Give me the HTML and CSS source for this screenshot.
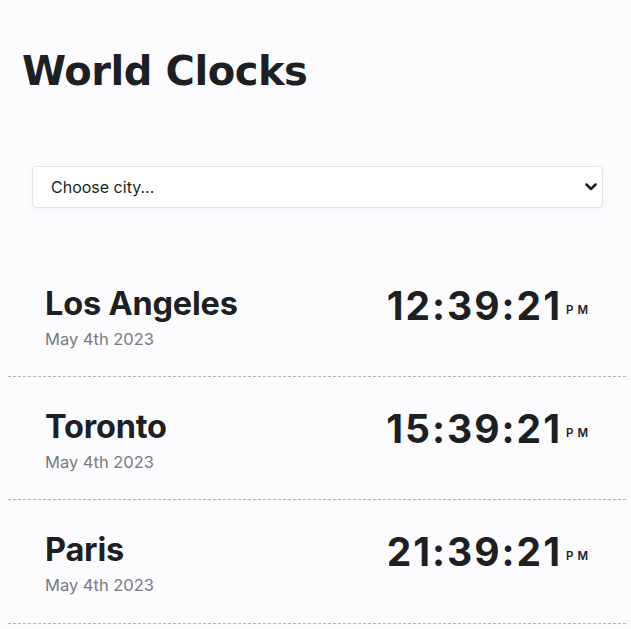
FILE: index.html
```html
<!DOCTYPE html>
<html lang="en">
<head>
<meta charset="utf-8">
<title>World Clocks</title>
<link rel="stylesheet" href="styles.css">
</head>
<body>
<main class="page">
  <h1 class="title">World Clocks</h1>
  <div class="select-wrap">
    <select class="city-select">
      <option>Choose city...</option>
    </select>
    <svg class="chevron" width="12" height="8" viewBox="0 0 12 8" aria-hidden="true"><path d="M1.5 1.5 L6 6 L10.5 1.5" fill="none" stroke="#1d1d1f" stroke-width="2.5" stroke-linecap="round" stroke-linejoin="round"/></svg>
  </div>
  <ul class="clocks">
    <li class="clock">
      <div class="city">
        <div class="city-name">Los Angeles</div>
        <div class="city-date">May 4th 2023</div>
      </div>
      <div class="time"><span class="hms">12:39:21</span><span class="ampm">PM</span></div>
    </li>
    <li class="clock">
      <div class="city">
        <div class="city-name">Toronto</div>
        <div class="city-date">May 4th 2023</div>
      </div>
      <div class="time"><span class="hms">15:39:21</span><span class="ampm">PM</span></div>
    </li>
    <li class="clock">
      <div class="city">
        <div class="city-name">Paris</div>
        <div class="city-date">May 4th 2023</div>
      </div>
      <div class="time"><span class="hms">21:39:21</span><span class="ampm">PM</span></div>
    </li>
  </ul>
</main>
</body>
</html>
```
FILE: styles.css
```css
html, body {
  margin: 0;
  padding: 0;
  background: #fcfcfe;
}
body {
  font-family: Inter, "Noto Sans", sans-serif;
  color: #1d1f22;
}
.page {
  padding: 0 5px 0 8px;
}
.title {
  font-family: "DejaVu Sans", sans-serif;
  font-weight: bold;
  font-size: 40px;
  line-height: 48px;
  letter-spacing: -0.45px;
  margin: 0;
  padding: 47px 0 0 14px;
  color: #1d1f22;
}
.select-wrap {
  position: relative;
  margin: 71px 23px 0 24px;
}
.city-select {
  display: block;
  width: 100%;
  height: 42px;
  box-sizing: border-box;
  appearance: none;
  -webkit-appearance: none;
  background: #fff;
  border: 1px solid #e3e3e8;
  border-radius: 5px;
  box-shadow: 0 1px 6px rgba(120, 120, 200, 0.08);
  padding: 0 18px;
  font-family: Inter, "Noto Sans", sans-serif;
  font-size: 16px;
  color: #1d1f22;
}
.chevron {
  position: absolute;
  right: 6px;
  top: 17px;
}
.clocks {
  list-style: none;
  margin: 46px 0 0;
  padding: 0;
}
.clock {
  display: flex;
  justify-content: space-between;
  align-items: flex-start;
  height: 122px;
  border-bottom: 1px dashed #b5b5b8;
  padding: 0 34px 0 37px;
}
.clock:last-child {
  height: 123px;
}
.city {
  display: flex;
  flex-direction: column;
  padding-top: 31px;
}
.city-name {
  font-weight: 700;
  font-size: 32.5px;
  line-height: 38px;
  letter-spacing: -0.2px;
  color: #1d1f22;
}
.city-date {
  font-size: 16.5px;
  line-height: 22px;
  margin-top: 5px;
  color: #7a7a7e;
}
.time {
  display: flex;
  align-items: baseline;
  padding-top: 29px;
}
.hms {
  font-weight: 700;
  font-size: 39px;
  line-height: 46px;
  letter-spacing: 2px;
  color: #1d1f22;
}
.ampm {
  font-weight: 600;
  font-size: 11.5px;
  letter-spacing: 4px;
  margin-left: 4px;
  position: relative;
  top: -6px;
  color: #1d1f22;
}
```
